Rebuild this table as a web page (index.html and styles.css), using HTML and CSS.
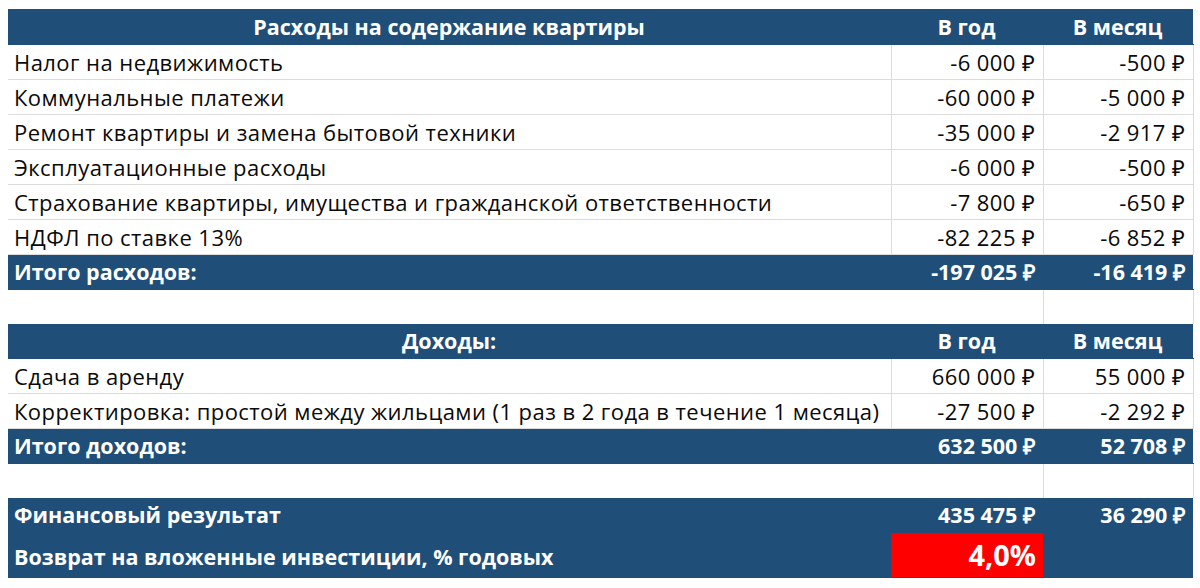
FILE: index.html
```html
<!DOCTYPE html>
<html lang="ru">
<head>
<meta charset="utf-8">
<link rel="stylesheet" href="styles.css">
</head>
<body>
<table class="sheet">
  <colgroup><col class="c1"><col class="c2"><col class="c3"></colgroup>
  <tr class="head"><td class="center">Расходы на содержание квартиры</td><td class="center">В год</td><td class="center">В месяц</td></tr>
  <tr class="row"><td>Налог на недвижимость</td><td class="num">-6 000 ₽</td><td class="num">-500 ₽</td></tr>
  <tr class="row"><td>Коммунальные платежи</td><td class="num">-60 000 ₽</td><td class="num">-5 000 ₽</td></tr>
  <tr class="row"><td>Ремонт квартиры и замена бытовой техники</td><td class="num">-35 000 ₽</td><td class="num">-2 917 ₽</td></tr>
  <tr class="row"><td>Эксплуатационные расходы</td><td class="num">-6 000 ₽</td><td class="num">-500 ₽</td></tr>
  <tr class="row"><td>Страхование квартиры, имущества и гражданской ответственности</td><td class="num">-7 800 ₽</td><td class="num">-650 ₽</td></tr>
  <tr class="row"><td>НДФЛ по ставке 13%</td><td class="num">-82 225 ₽</td><td class="num">-6 852 ₽</td></tr>
  <tr class="head"><td>Итого расходов:</td><td class="num">-197 025 ₽</td><td class="num">-16 419 ₽</td></tr>
  <tr class="blank"><td colspan="2"></td><td></td></tr>
  <tr class="head"><td class="center">Доходы:</td><td class="center">В год</td><td class="center">В месяц</td></tr>
  <tr class="row"><td>Сдача в аренду</td><td class="num">660 000 ₽</td><td class="num">55 000 ₽</td></tr>
  <tr class="row"><td>Корректировка: простой между жильцами (1 раз в 2 года в течение 1 месяца)</td><td class="num">-27 500 ₽</td><td class="num">-2 292 ₽</td></tr>
  <tr class="head"><td>Итого доходов:</td><td class="num">632 500 ₽</td><td class="num">52 708 ₽</td></tr>
  <tr class="blank"><td colspan="2"></td><td></td></tr>
  <tr class="head"><td>Финансовый результат</td><td class="num">435 475 ₽</td><td class="num">36 290 ₽</td></tr>
  <tr class="head tall"><td class="lower">Возврат на вложенные инвестиции, % годовых</td><td class="num red">4,0%</td><td></td></tr>
</table>
</body>
</html>
```

FILE: styles.css
```css
html, body {
  margin: 0;
  padding: 0;
  background: #ffffff;
}
body {
  padding: 9px 0 0 8px;
  font-family: "Open Sans", "Liberation Sans", sans-serif;
}
.sheet {
  border-collapse: collapse;
  table-layout: fixed;
  width: 1185px;
}
.c1 { width: 883px; }
.c2 { width: 152px; }
.c3 { width: 150px; }
.sheet td {
  height: 34px;
  padding: 0 7px 0 6px;
  font-size: 22px;
  letter-spacing: 0.44px;
  line-height: 34px;
  white-space: nowrap;
  overflow: hidden;
  vertical-align: middle;
}
.row td {
  color: #0a0a0a;
  border-bottom: 1px solid #dcdcdc;
  border-right: 1px solid #dcdcdc;
}
.blank td {
  height: 34px;
  border-right: 1px solid #dcdcdc;
}
.head td {
  background: #1f4e78;
  color: #ffffff;
  font-weight: 700;
  font-size: 21.5px;
  letter-spacing: 0;
  border-bottom: 1px solid #1f4e78;
}
.head:first-child td { height: 35px; }
.center { text-align: center; }
.num { text-align: right; }
.tall td {
  height: 44px;
  line-height: 44px;
  vertical-align: top;
}
.tall .lower {
  padding-top: 7px;
  height: 37px;
  line-height: 34px;
}
.tall .red {
  background: #ff0000;
  font-size: 29px;
  line-height: 44px;
}
```
